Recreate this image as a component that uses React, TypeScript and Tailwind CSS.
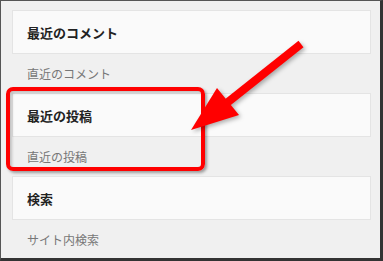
const widgets = [
  { title: "最近のコメント", sub: "直近のコメント" },
  { title: "最近の投稿", sub: "直近の投稿" },
  { title: "検索", sub: "サイト内検索" },
];

const App = () => {
  return (
    <div
      className="relative w-[383px] h-[261px] overflow-hidden bg-[#f0f0f0] border-t border-l border-[#555] border-r-[3px] border-b-[3px] border-r-[#333] border-b-[#333]"
      style={{ fontFamily: '"Noto Sans CJK JP", "Noto Sans", sans-serif' }}
    >
      <div className="pt-[9px] pl-[11px] pr-[9px] flex flex-col">
        {widgets.map(({ title, sub }) => (
          <div key={title} className="flex flex-col">
            <div className="h-[44px] bg-[#fafafa] border border-[#e4e4e4] flex items-center pl-[14px]">
              <span className="text-[13px] font-bold text-[#222] leading-none">
                {title}
              </span>
            </div>
            <div className="h-[39px] flex items-center pl-[15px]">
              <span className="text-[12px] text-[#777] leading-none">{sub}</span>
            </div>
          </div>
        ))}
      </div>

      {/* highlight box */}
      <div className="absolute left-[5px] top-[86px] w-[199px] h-[84px] rounded-[7px] border-[4px] border-[#ff0000] shadow-[2px_2px_3px_rgba(0,0,0,0.35),inset_2px_2px_3px_rgba(0,0,0,0.2)]" />

      {/* arrow */}
      <svg
        className="absolute left-0 top-0 pointer-events-none"
        width="383"
        height="261"
        viewBox="0 0 383 261"
      >
        <g style={{ filter: "drop-shadow(2px 2px 2px rgba(0,0,0,0.3))" }}>
          <line x1="300" y1="43" x2="222" y2="105" stroke="#ff0000" strokeWidth="8" />
          <polygon points="190,129 216,87 238,114" fill="#ff0000" />
        </g>
      </svg>
    </div>
  );
};

export default App;
